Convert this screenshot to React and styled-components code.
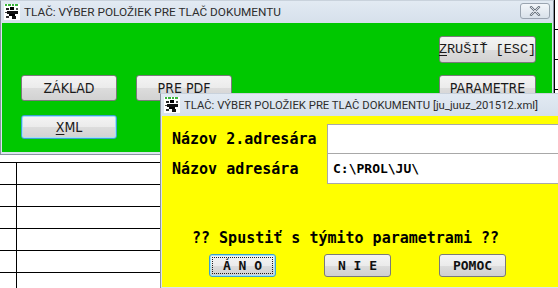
import styled, { createGlobalStyle } from 'styled-components';

const GlobalStyle = createGlobalStyle`
  html, body {
    margin: 0;
    padding: 0;
    background: #ffffff;
  }
  body {
    font-family: 'Liberation Sans', Arial, sans-serif;
  }
`;

const Desktop = styled.div`
  position: relative;
  width: 558px;
  height: 288px;
  overflow: hidden;
  background: #ffffff;
`;

const Sheet = styled.div`
  display: flex;
  flex-direction: column;
  padding-top: 162px;
  width: 160px;
`;

const SheetRow = styled.div`
  display: grid;
  grid-template-columns: 17px 1fr;
  height: 21px;
  border-top: 1px solid #000;
`;

const SheetCell = styled.div`
  border-right: ${(p) => (p.last ? 'none' : '1px solid #000')};
`;

const EdgeStrip = styled.div`
  position: absolute;
  left: 554px;
  top: 0;
  width: 4px;
  height: 93px;
  border-left: 1px solid #000;
  background: repeating-linear-gradient(
    to bottom,
    #fff 0,
    #fff 29px,
    #000 29px,
    #000 30px
  );
`;

const Window = styled.div`
  position: absolute;
  left: ${(p) => p.x}px;
  top: ${(p) => p.y}px;
  width: ${(p) => p.w}px;
  height: ${(p) => p.h}px;
  display: flex;
  flex-direction: column;
  background: #dbe4ee;
  border: 1px solid #8a94a0;
  border-top-color: #c9d2dc;
  box-sizing: border-box;
`;

const TitleBar = styled.div`
  display: flex;
  align-items: center;
  height: 22px;
  padding: 0 3px;
  gap: 4px;
  background: linear-gradient(to bottom, #e2eaf3, #d6e0eb);
  flex-shrink: 0;
`;

const Title = styled.span`
  flex: 1;
  font-family: 'Roboto', 'Liberation Sans', sans-serif;
  font-size: ${(p) => p.size || 12}px;
  color: #2d2d2d;
  white-space: nowrap;
  overflow: hidden;
`;

const CloseButton = styled.div`
  width: 30px;
  height: 16px;
  margin-top: -3px;
  border: 1px solid #9aa4b0;
  border-radius: 3px;
  background: linear-gradient(to bottom, #f3f6fa, #d9e1ea);
  display: flex;
  align-items: center;
  justify-content: center;
  box-sizing: border-box;
`;

const Body = styled.div`
  flex: 1;
  margin: 0 1px 2px 1px;
  background: ${(p) => p.bg};
`;

const GreenBody = styled(Body)`
  display: grid;
  grid-template-columns: 96px 96px 1fr 97px;
  grid-template-rows: 27px 26px 26px;
  column-gap: 19px;
  row-gap: 12px;
  padding: 13px 16px 0 19px;
`;

const WinButton = styled.div`
  display: flex;
  align-items: center;
  justify-content: center;
  box-sizing: border-box;
  white-space: nowrap;
  border: 1px solid ${(p) => (p.focused ? '#3c9fd0' : '#7a7a7a')};
  box-shadow: ${(p) => (p.focused ? 'inset 0 0 0 1px #9fe0f6' : 'none')};
  border-radius: 3px;
  background: linear-gradient(to bottom, #f4f4f4 0%, #ebebeb 50%, #dcdcdc 51%, #d2d2d2 100%);
  color: #1a1a1a;
  font-family: ${(p) =>
    p.mono
      ? "'Liberation Mono', 'DejaVu Sans Mono', monospace"
      : "'Liberation Sans Narrow', 'DejaVu Sans Condensed', 'Liberation Sans', sans-serif"};
  font-size: ${(p) => (p.mono ? '13.5px' : '14px')};
  font-stretch: condensed;
  grid-column: ${(p) => p.col};
  grid-row: ${(p) => p.row};
  margin-top: ${(p) => p.mt || 0}px;
  u {
    text-decoration: underline;
    text-underline-offset: 2px;
  }
`;

const YellowBody = styled(Body)`
  display: flex;
  flex-direction: column;
  padding: 8px 0 0 10px;
`;

const FieldRow = styled.div`
  display: grid;
  grid-template-columns: 155px 1fr;
  height: ${(p) => p.h}px;
  align-items: center;
`;

const Label = styled.span`
  font-family: 'DejaVu Sans Mono', monospace;
  font-weight: bold;
  font-size: 15px;
  color: #000;
`;

const Input = styled.div`
  height: 100%;
  box-sizing: border-box;
  background: #fff;
  border: 1px solid #a8a8a8;
  border-right: none;
  border-top: ${(p) => (p.first ? '1px solid #a8a8a8' : 'none')};
  display: flex;
  align-items: center;
  padding-left: 5px;
  font-family: 'DejaVu Sans Mono', monospace;
  font-weight: bold;
  font-size: 13px;
  color: #000;
`;

const Question = styled.div`
  margin: 45px 0 0 20px;
  font-family: 'DejaVu Sans Mono', monospace;
  font-weight: bold;
  font-size: 15px;
  color: #000;
`;

const ActionRow = styled.div`
  display: grid;
  grid-template-columns: 67px 67px 67px;
  column-gap: 48px;
  margin: 7px 0 0 37px;
  height: 23px;
`;

const ActionButton = styled.div`
  display: flex;
  align-items: center;
  justify-content: center;
  box-sizing: border-box;
  border: 1px solid ${(p) => (p.focused ? '#3c9fd0' : '#7a7a7a')};
  box-shadow: ${(p) => (p.focused ? 'inset 0 0 0 1px #9fe0f6' : 'none')};
  border-radius: 3px;
  background: linear-gradient(to bottom, #f4f4f4 0%, #ebebeb 50%, #dcdcdc 51%, #d0d0d0 100%);
  font-family: 'DejaVu Sans Mono', monospace;
  font-weight: bold;
  font-size: 13px;
  color: #111;
  white-space: pre;
  position: relative;
  &::after {
    content: '';
    display: ${(p) => (p.focused ? 'block' : 'none')};
    position: absolute;
    inset: 2px;
    border: 1px dotted #222;
  }
`;

const AppIcon = () => (
  <svg width="16" height="16" viewBox="0 0 16 16" shapeRendering="crispEdges">
    <rect width="16" height="16" fill="#fff" />
    <rect x="1" y="0" width="2" height="2" fill="#3bb53b" />
    <rect x="4" y="0" width="3" height="2" fill="#3bb53b" />
    <rect x="8" y="0" width="2" height="2" fill="#3bb53b" />
    <rect x="11" y="0" width="3" height="2" fill="#3bb53b" />
    <rect x="2" y="4" width="3" height="2" fill="#222" />
    <rect x="6" y="3" width="4" height="3" fill="#000" />
    <rect x="3" y="7" width="11" height="3" fill="#111" />
    <rect x="1" y="8" width="2" height="1" fill="#444" />
    <rect x="5" y="10" width="6" height="2" fill="#000" />
    <rect x="2" y="12" width="3" height="2" fill="#333" />
    <rect x="8" y="12" width="4" height="3" fill="#111" />
    <rect x="12" y="4" width="2" height="2" fill="#555" />
  </svg>
);

const CloseGlyph = () => (
  <svg width="12" height="10" viewBox="0 0 12 10">
    <path
      d="M2 1 L10 9 M10 1 L2 9"
      stroke="#6b7580"
      strokeWidth="2.4"
      strokeLinecap="round"
      fill="none"
    />
    <path
      d="M2 1 L10 9 M10 1 L2 9"
      stroke="#f4f6f8"
      strokeWidth="0.8"
      strokeLinecap="round"
      fill="none"
    />
  </svg>
);

const sheetRows = Array.from({ length: 6 });

const App = () => (
  <Desktop>
    <GlobalStyle />
    <Sheet>
      {sheetRows.map((_, i) => (
        <SheetRow key={i}>
          <SheetCell />
          <SheetCell last />
        </SheetRow>
      ))}
    </Sheet>
    <EdgeStrip />

    <Window x={0} y={0} w={554} h={155}>
      <TitleBar>
        <AppIcon />
        <Title size={11.8}>TLAČ: VÝBER POLOŽIEK PRE TLAČ DOKUMENTU</Title>
        <CloseButton>
          <CloseGlyph />
        </CloseButton>
      </TitleBar>
      <GreenBody bg="#00c800">
        <WinButton col="4" row="1" mono>
          <span>
            <u>Z</u>RUŠIŤ [ESC]
          </span>
        </WinButton>
        <WinButton col="1" row="2">ZÁKLAD</WinButton>
        <WinButton col="2" row="2">PRE PDF</WinButton>
        <WinButton col="4" row="2">PARAMETRE</WinButton>
        <WinButton col="1" row="3" mt={2} focused>
          <span>
            <u>X</u>ML
          </span>
        </WinButton>
      </GreenBody>
    </Window>

    <Window x={160} y={93} w={400} h={197}>
      <TitleBar>
        <AppIcon />
        <Title size={11.3}>TLAČ: VÝBER POLOŽIEK PRE TLAČ DOKUMENTU [ju_juuz_201512.xml]</Title>
      </TitleBar>
      <YellowBody bg="#ffff00">
        <FieldRow h={30}>
          <Label>Názov 2.adresára</Label>
          <Input first />
        </FieldRow>
        <FieldRow h={30}>
          <Label>Názov adresára</Label>
          <Input>C:\PROL\JU\</Input>
        </FieldRow>
        <Question>?? Spustiť s týmito parametrami ??</Question>
        <ActionRow>
          <ActionButton focused>Á N O</ActionButton>
          <ActionButton>N I E</ActionButton>
          <ActionButton>POMOC</ActionButton>
        </ActionRow>
      </YellowBody>
    </Window>
  </Desktop>
);

export default App;
